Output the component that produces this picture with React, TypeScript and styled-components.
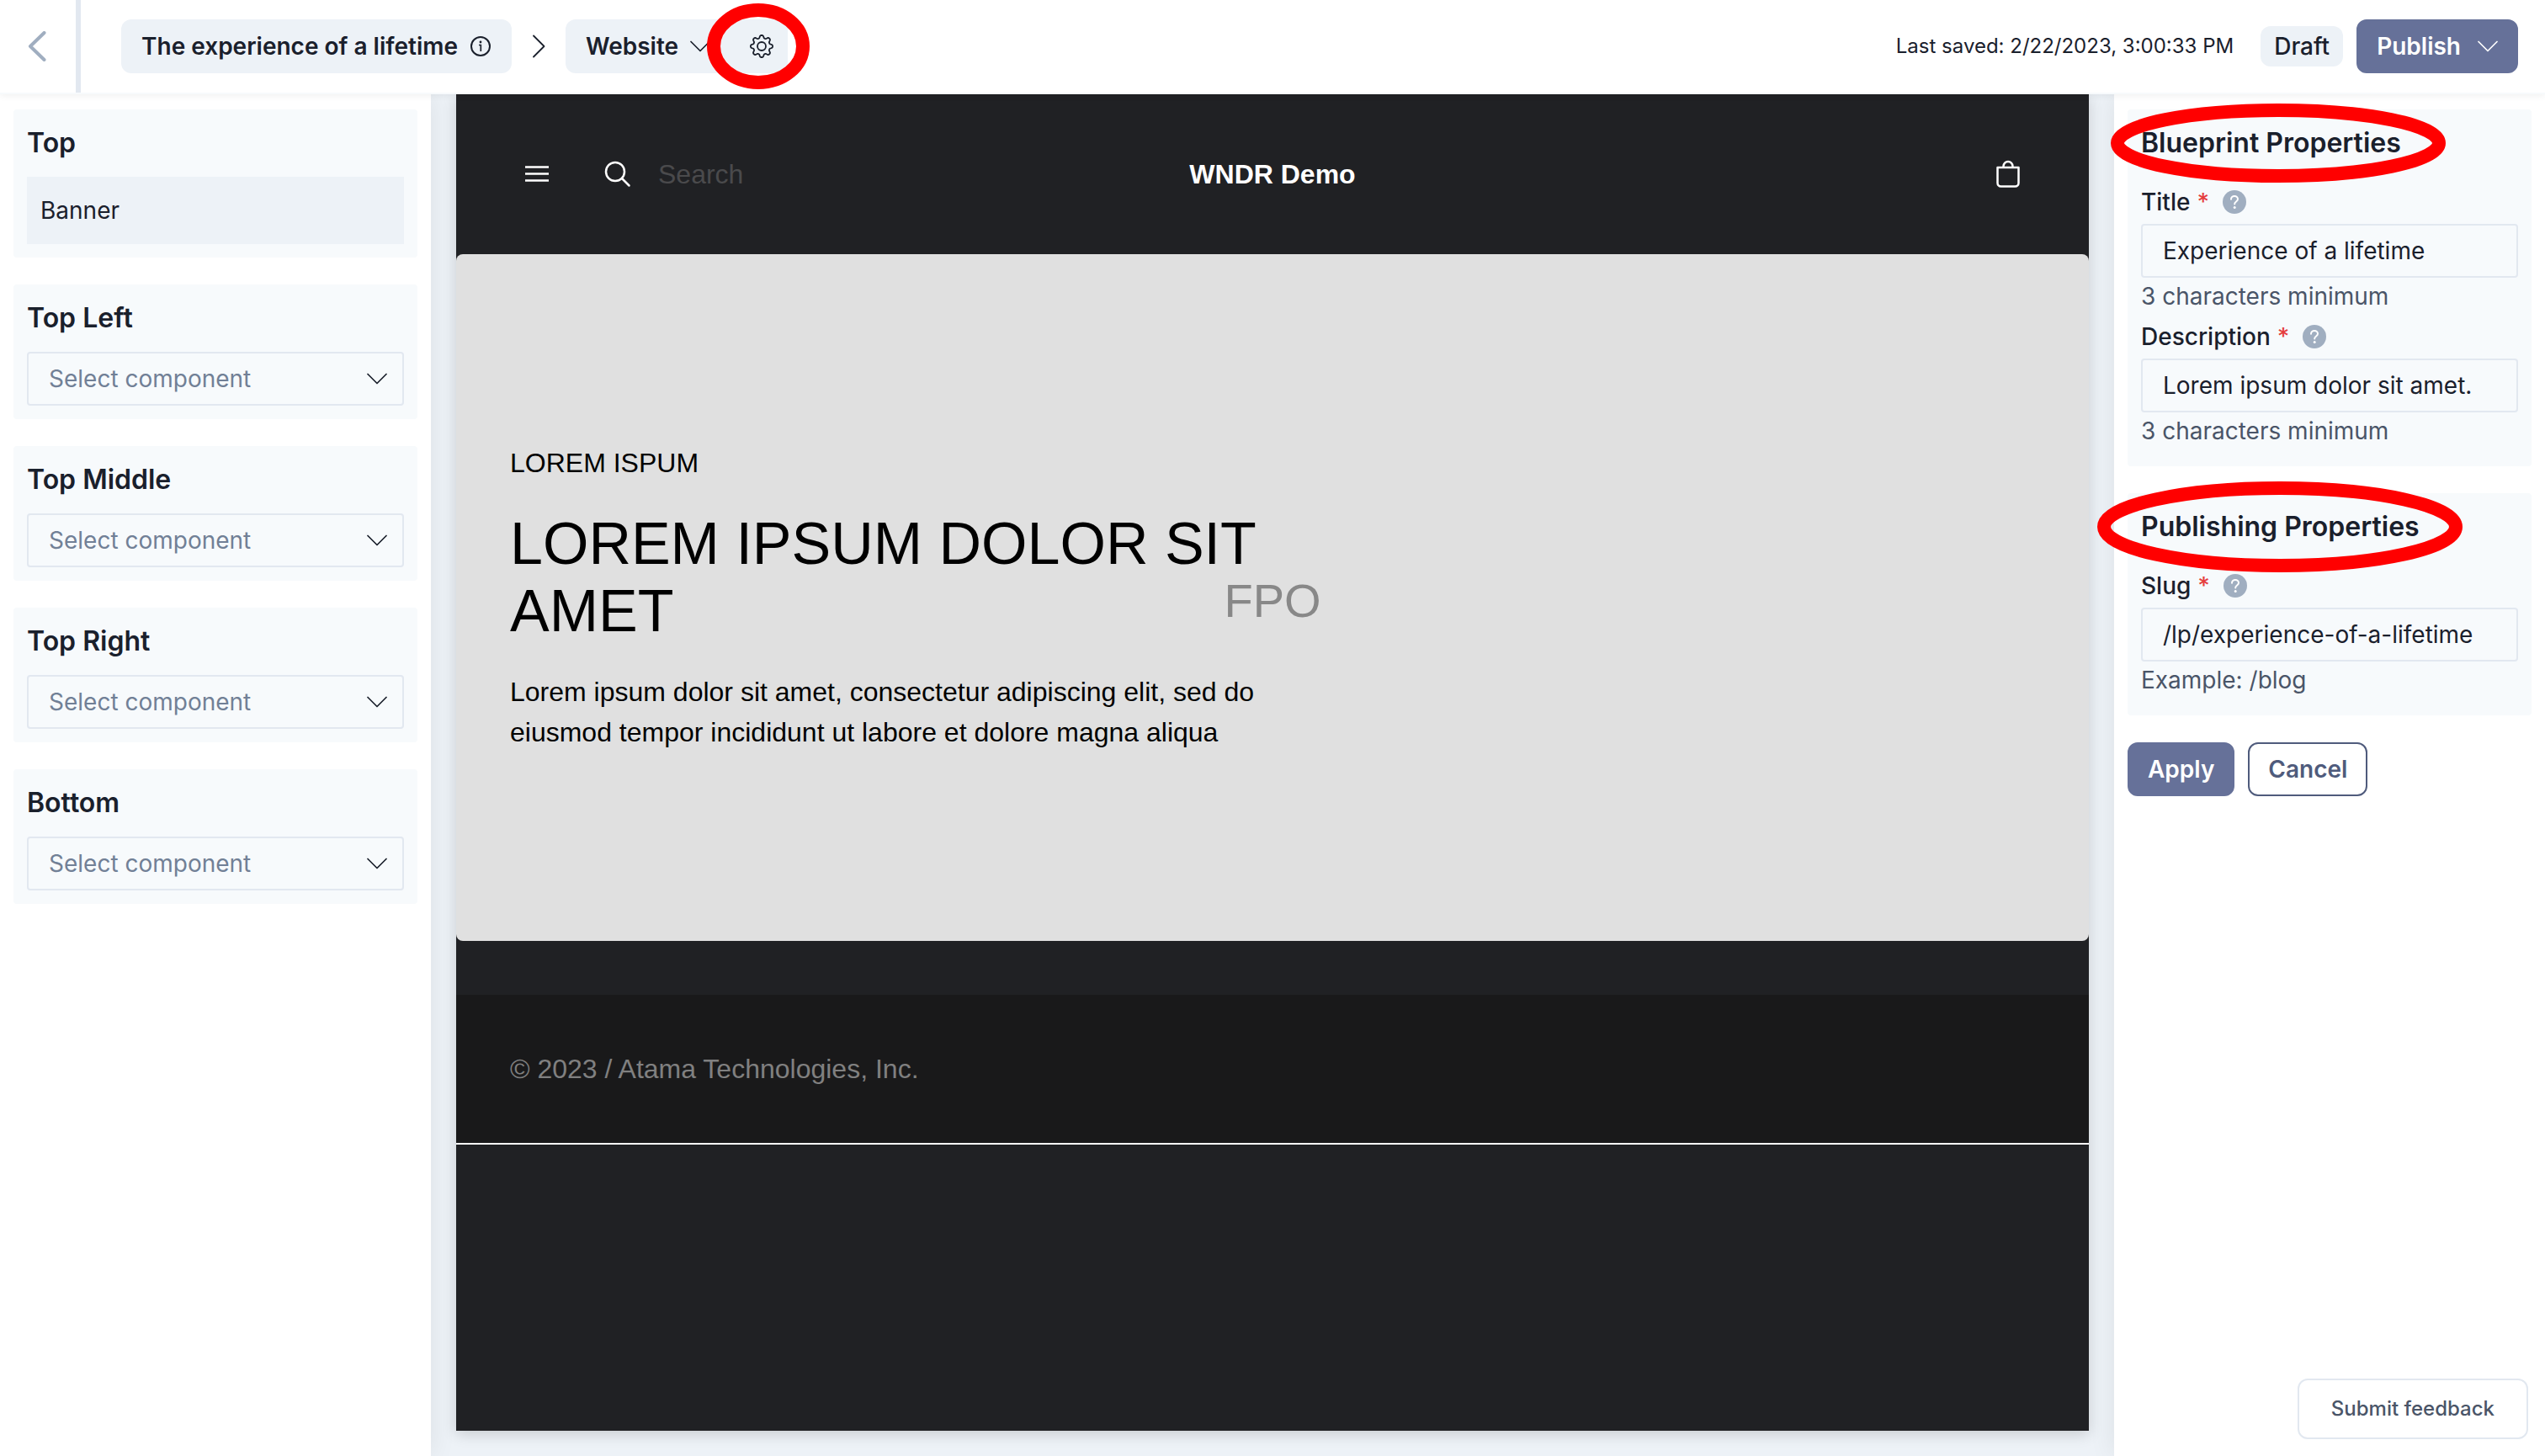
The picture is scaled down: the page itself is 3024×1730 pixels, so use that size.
import React from "react";
import styled, { createGlobalStyle, css } from "styled-components";

const ink = "#1a202c";
const line = "#e2e8f0";
const soft = "#f7fafc";
const pill = "#edf2f7";
const brand = "#667199";

const GlobalStyle = createGlobalStyle`
  *, *::before, *::after { box-sizing: border-box; }
  html, body, #root { height: 100%; }
  body {
    margin: 0;
    background: #fff;
    color: ${ink};
    font-family: Inter, "Liberation Sans", sans-serif;
    font-size: 28px;
    line-height: 44px;
    -webkit-font-smoothing: antialiased;
  }
  button, input, select { font: inherit; color: inherit; margin: 0; }
  button { cursor: pointer; }
  h1, h2, p { margin: 0; }
`;

const Page = styled.div`
  display: flex;
  flex-direction: column;
  min-height: 100vh;
`;

const Header = styled.header`
  position: relative;
  z-index: 2;
  display: flex;
  align-items: center;
  height: 112px;
  padding-right: 32px;
  background: #fff;
  border-bottom: 2px solid ${soft};
  box-shadow: 0 2px 8px rgba(0, 0, 0, 0.06);
`;

const BackLink = styled.a`
  display: flex;
  align-items: center;
  justify-content: center;
  align-self: stretch;
  width: 96px;
  padding-right: 2px;
  border-right: 6px solid ${line};
  color: #a0aec0;
`;

const Crumbs = styled.nav`
  display: flex;
  align-items: center;
  gap: 24px;
  padding-left: 48px;
`;

const Chip = styled.div<{ $flush?: boolean }>`
  display: flex;
  align-items: center;
  height: 64px;
  gap: 14px;
  padding: 0 ${(p) => (p.$flush ? 16 : 24)}px 0 24px;
  border-radius: ${(p) => (p.$flush ? "12px 0 0 12px" : "12px")};
  background: ${pill};
  font-weight: 600;
`;

const PlainButton = styled.button`
  position: relative;
  display: flex;
  align-items: center;
  gap: 14px;
  padding: 0;
  border: 0;
  background: none;
  font-weight: 600;
`;

const GearButton = styled(PlainButton)`
  margin-left: 32px;
`;

const HeaderEnd = styled.div`
  display: flex;
  align-items: center;
  gap: 16px;
  margin-left: auto;
`;

const Saved = styled.span`
  margin-right: 16px;
  font-size: 24px;
`;

const Status = styled.span`
  height: 48px;
  padding: 0 16px;
  border-radius: 12px;
  background: ${pill};
  font-weight: 500;
  line-height: 48px;
`;

const Button = styled.button<{ $outline?: boolean }>`
  display: flex;
  align-items: center;
  justify-content: center;
  gap: 20px;
  height: 64px;
  padding: 0 22px;
  border: 2px solid ${brand};
  border-radius: 12px;
  background: ${brand};
  color: #fff;
  font-weight: 600;
  ${(p) =>
    p.$outline &&
    css`
      border-color: #4f5b7c;
      background: #fff;
      color: #4f5b7c;
    `}
`;

const Workspace = styled.div`
  display: flex;
  flex: 1;
`;

const Panel = styled.aside`
  position: relative;
  z-index: 1;
  display: flex;
  flex-direction: column;
  flex: none;
  gap: 32px;
  width: 512px;
  padding: 18px 16px 20px;
  background: #fff;
  box-shadow: 0 0 30px rgba(0, 0, 0, 0.08);
`;

const Card = styled.section`
  padding: 16px;
  border-radius: 4px;
  background: ${soft};
`;

const CardTitle = styled.h2<{ $space: number }>`
  position: relative;
  width: max-content;
  margin-bottom: ${(p) => p.$space}px;
  font-size: 32px;
  font-weight: 600;
  line-height: 48px;
`;

const Slot = styled.div`
  height: 80px;
  padding: 0 16px;
  background: ${pill};
  line-height: 80px;
`;

const SelectWrap = styled.div`
  display: grid;
  align-items: center;
`;

const Select = styled.select`
  grid-area: 1 / 1;
  width: 100%;
  height: 64px;
  padding: 0 24px;
  border: 2px solid ${line};
  border-radius: 4px;
  background: ${soft};
  color: #718096;
  appearance: none;
`;

const SelectArrow = styled.span`
  display: flex;
  grid-area: 1 / 1;
  justify-self: end;
  padding-right: 20px;
  pointer-events: none;
`;

const Field = styled.div`
  padding-bottom: 4px;
`;

const FieldHead = styled.div`
  display: flex;
  align-items: center;
  margin-bottom: 4px;
  font-weight: 500;
`;

const Required = styled.span`
  margin: 0 16px 0 8px;
  color: #e53e3e;
`;

const HelpButton = styled.button`
  display: flex;
  padding: 0;
  border: 0;
  background: none;
`;

const Input = styled.input`
  display: block;
  width: 100%;
  height: 64px;
  padding: 0 24px;
  border: 2px solid ${line};
  border-radius: 4px;
  background: ${soft};
`;

const Hint = styled.p`
  color: #4a5568;
`;

const Actions = styled.div`
  display: flex;
  gap: 16px;
`;

const Feedback = styled.button`
  height: 72px;
  margin: auto 4px 0 auto;
  padding: 0 38px;
  border: 2px solid ${line};
  border-radius: 12px;
  background: #fff;
  color: #4a5568;
  font-size: 24px;
  font-weight: 500;
`;

const Canvas = styled.main`
  display: flex;
  flex: 1;
  min-width: 0;
  padding: 0 30px 30px;
  background: ${pill};
`;

const Preview = styled.div`
  flex: 1;
  min-width: 0;
  background: #202124;
  box-shadow: 0 4px 16px rgba(0, 0, 0, 0.16);
  font-family: "Liberation Sans", Arial, sans-serif;
  font-size: 32px;
  line-height: 48px;
`;

const SiteNav = styled.div`
  display: grid;
  grid-template-columns: 1fr auto 1fr;
  align-items: center;
  height: 190px;
  padding: 0 80px;
  color: #fff;
`;

const NavStart = styled.div`
  display: flex;
  align-items: center;
  gap: 64px;
`;

const SearchBox = styled.label`
  display: flex;
  align-items: center;
  gap: 32px;
`;

const SearchInput = styled.input`
  width: 320px;
  padding: 0;
  border: 0;
  background: none;
  &::placeholder { color: #4a4a4c; opacity: 1; }
`;

const Brand = styled.strong`
  font-weight: 700;
`;

const NavEnd = styled(PlainButton)`
  justify-self: end;
`;

const Banner = styled.section`
  display: grid;
  align-items: center;
  height: 816px;
  border-radius: 8px;
  background: #e0e0e0;
  color: #000;
`;

const Placeholder = styled.span`
  grid-area: 1 / 1;
  justify-self: center;
  padding-top: 8px;
  color: #888;
  font-size: 56px;
`;

const Copy = styled.div`
  display: flex;
  grid-area: 1 / 1;
  flex-direction: column;
  gap: 32px;
  width: 52%;
  padding-left: 64px;
`;

const Headline = styled.h1`
  font-size: 70px;
  font-weight: 400;
  line-height: 80px;
`;

const Footer = styled.footer`
  margin-top: 64px;
  padding: 64px;
  border-bottom: 2px solid #fff;
  background: #19191a;
  color: #808080;
`;

const RingSvg = styled.svg<{ $left: number }>`
  position: absolute;
  top: 50%;
  left: ${(p) => p.$left}px;
  transform: translateY(-50%);
  pointer-events: none;
`;

type RingProps = { left: number; width: number; height: number };

const Ring = ({ left, width, height }: RingProps) => (
  <RingSvg $left={left} width={width} height={height} fill="none" stroke="#f00" strokeWidth="16" aria-hidden="true">
    <ellipse cx={width / 2} cy={height / 2} rx={width / 2 - 8} ry={height / 2 - 8} />
  </RingSvg>
);

const Chevron = () => (
  <svg width="24" height="14" viewBox="0 0 24 14" fill="none" stroke="currentColor" strokeWidth="1.700" strokeLinecap="round" strokeLinejoin="round" aria-hidden="true">
    <path d="M1 1.500 12 12.500 23 1.500" />
  </svg>
);

const BackIcon = () => (
  <svg width="22" height="36" viewBox="0 0 22 36" fill="none" stroke="currentColor" strokeWidth="4" strokeLinecap="round" strokeLinejoin="round" aria-hidden="true">
    <path d="M19.500 2 3 18 19.500 34" />
  </svg>
);

const CrumbIcon = () => (
  <svg width="16" height="28" viewBox="0 0 16 28" fill="none" stroke="currentColor" strokeWidth="1.800" strokeLinecap="round" strokeLinejoin="round" aria-hidden="true">
    <path d="M2 1.500 14.500 14 2 26.500" />
  </svg>
);

const InfoIcon = () => (
  <svg width="26" height="26" viewBox="0 0 26 26" fill="none" stroke="currentColor" strokeWidth="2" aria-hidden="true">
    <circle cx="13" cy="13" r="11" />
    <path d="M11 11.500h2.300v7.500" strokeWidth="1.700" />
    <circle cx="13" cy="8" r="1.400" fill="currentColor" stroke="none" />
  </svg>
);

const gearPath = (() => {
  const pts: string[] = [];
  const steps = 96;
  for (let i = 0; i <= steps; i++) {
    const a = (i / steps) * Math.PI * 2 - Math.PI / 2;
    const wave = Math.tanh(1.6 * Math.cos(8 * (a + Math.PI / 2))) / Math.tanh(1.6);
    const r = 11.5 + 1.6 * wave;
    pts.push(`${(15 + r * Math.cos(a)).toFixed(2)} ${(15 + r * Math.sin(a)).toFixed(2)}`);
  }
  return `M${pts.join("L")}Z`;
})();

const GearIcon = () => (
  <svg width="30" height="30" viewBox="0 0 30 30" fill="none" stroke="currentColor" strokeWidth="1.800" strokeLinejoin="round" aria-hidden="true">
    <path d={gearPath} />
    <circle cx="15" cy="15" r="5" />
  </svg>
);

const MenuIcon = () => (
  <svg width="32" height="32" viewBox="0 0 32 32" stroke="currentColor" strokeWidth="2.500" aria-hidden="true">
    <path d="M2 7.500h28M2 15.500h28M2 23.500h28" />
  </svg>
);

const SearchIcon = () => (
  <svg width="32" height="32" viewBox="0 0 32 32" fill="none" stroke="currentColor" strokeWidth="2.500" strokeLinecap="round" aria-hidden="true">
    <circle cx="13" cy="13" r="11" />
    <path d="m21 21 8.500 8.500" />
  </svg>
);

const BagIcon = () => (
  <svg width="32" height="34" viewBox="0 0 32 34" fill="none" stroke="currentColor" strokeWidth="2.500" strokeLinejoin="round" aria-hidden="true">
    <path d="M3.500 9h25v18.500a4 4 0 0 1-4 4h-17a4 4 0 0 1-4-4zM10.500 9V7.500a5.500 5.500 0 0 1 11 0V9" />
  </svg>
);

const HelpIcon = () => (
  <svg width="28" height="28" viewBox="0 0 28 28" fill="none" aria-hidden="true">
    <circle cx="14" cy="14" r="14" fill="#a0aec0" />
    <path d="M10 10.800C10 8.500 11.800 7 14 7s4 1.500 4 3.600c0 3-3.800 2.900-3.800 5.900" stroke="#fff" strokeWidth="2" strokeLinecap="round" />
    <circle cx="14.200" cy="20.500" r="1.500" fill="#fff" />
  </svg>
);

const emptySlots = ["Top Left", "Top Middle", "Top Right", "Bottom"];

type FieldProps = { id: string; label: string; value: string; hint: string };

const TextField = ({ id, label, value, hint }: FieldProps) => (
  <Field>
    <FieldHead>
      <label htmlFor={id}>{label}</label>
      <Required>*</Required>
      <HelpButton type="button" aria-label={`About ${label}`}>
        <HelpIcon />
      </HelpButton>
    </FieldHead>
    <Input id={id} defaultValue={value} required />
    <Hint>{hint}</Hint>
  </Field>
);

export default function App() {
  return (
    <>
      <GlobalStyle />
      <Page>
        <Header>
          <BackLink href="#" aria-label="Back">
            <BackIcon />
          </BackLink>
          <Crumbs>
            <Chip>
              The experience of a lifetime
              <PlainButton type="button" aria-label="Details">
                <InfoIcon />
              </PlainButton>
            </Chip>
            <CrumbIcon />
            <Chip $flush>
              <PlainButton type="button">
                Website
                <Chevron />
              </PlainButton>
              <GearButton type="button" aria-label="Settings">
                <GearIcon />
                <Ring left={-50} width={122} height={102} />
              </GearButton>
            </Chip>
          </Crumbs>
          <HeaderEnd>
            <Saved>Last saved: 2/22/2023, 3:00:33 PM</Saved>
            <Status>Draft</Status>
            <Button type="button">
              Publish
              <Chevron />
            </Button>
          </HeaderEnd>
        </Header>
        <Workspace>
          <Panel>
            <Card>
              <CardTitle $space={16}>Top</CardTitle>
              <Slot>Banner</Slot>
            </Card>
            {emptySlots.map((name) => (
              <Card key={name}>
                <CardTitle $space={16}>{name}</CardTitle>
                <SelectWrap>
                  <Select aria-label={name}>
                    <option>Select component</option>
                  </Select>
                  <SelectArrow>
                    <Chevron />
                  </SelectArrow>
                </SelectWrap>
              </Card>
            ))}
          </Panel>
          <Canvas>
            <Preview>
              <SiteNav>
                <NavStart>
                  <PlainButton type="button" aria-label="Menu">
                    <MenuIcon />
                  </PlainButton>
                  <SearchBox>
                    <SearchIcon />
                    <SearchInput type="search" placeholder="Search" aria-label="Search" />
                  </SearchBox>
                </NavStart>
                <Brand>WNDR Demo</Brand>
                <NavEnd type="button" aria-label="Bag">
                  <BagIcon />
                </NavEnd>
              </SiteNav>
              <Banner>
                <Placeholder>FPO</Placeholder>
                <Copy>
                  <p>LOREM ISPUM</p>
                  <Headline>LOREM IPSUM DOLOR SIT AMET</Headline>
                  <p>
                    Lorem ipsum dolor sit amet, consectetur adipiscing elit, sed do eiusmod tempor
                    incididunt ut labore et dolore magna aliqua
                  </p>
                </Copy>
              </Banner>
              <Footer>© 2023 / Atama Technologies, Inc.</Footer>
            </Preview>
          </Canvas>
          <Panel>
            <Card>
              <CardTitle $space={24}>
                Blueprint Properties
                <Ring left={-36} width={398} height={94} />
              </CardTitle>
              <TextField id="title" label="Title" value="Experience of a lifetime" hint="3 characters minimum" />
              <TextField id="description" label="Description" value="Lorem ipsum dolor sit amet." hint="3 characters minimum" />
            </Card>
            <Card>
              <CardTitle $space={24}>
                Publishing Properties
                <Ring left={-52} width={434} height={108} />
              </CardTitle>
              <TextField id="slug" label="Slug" value="/lp/experience-of-a-lifetime" hint="Example: /blog" />
            </Card>
            <Actions>
              <Button type="button">Apply</Button>
              <Button type="button" $outline>
                Cancel
              </Button>
            </Actions>
            <Feedback type="button">Submit feedback</Feedback>
          </Panel>
        </Workspace>
      </Page>
    </>
  );
}
